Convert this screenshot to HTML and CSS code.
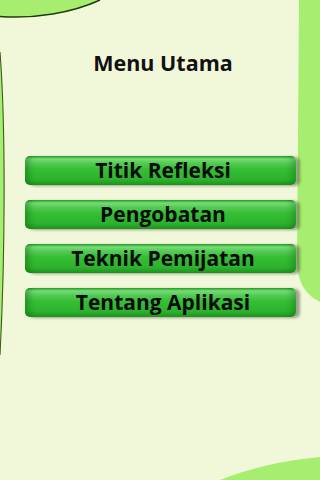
FILE: index.html
```html
<!DOCTYPE html>
<html lang="id">
<head>
    <meta charset="UTF-8">
    <meta name="viewport" content="width=device-width, initial-scale=1.0">
    <title>Menu Utama</title>
    <link rel="stylesheet" href="styles.css">
</head>
<body>
    <svg class="backdrop" width="320" height="480" viewBox="0 0 320 480" aria-hidden="true">
        <path class="blob" d="M0,0 L0,16.5 A135,77 0 0 0 100,0 Z"/>
        <path class="edge" d="M0,16.5 A135,77 0 0 0 100,0"/>
        <path class="blob" d="M299,0 L297,265 Q299,292 320,302 L320,0 Z"/>
        <path class="blob" d="M0,52 C6,130 5,260 0,355 Z"/>
        <path class="edge thin" d="M0,52 C6,130 5,260 0,355"/>
        <path class="blob" d="M220,480 Q265,462 320,457 L320,480 Z"/>
    </svg>

    <div class="screen">
        <h1 class="title">Menu Utama</h1>
        <div class="menu">
            <button class="menu-btn">Titik Refleksi</button>
            <button class="menu-btn">Pengobatan</button>
            <button class="menu-btn">Teknik Pemijatan</button>
            <button class="menu-btn">Tentang Aplikasi</button>
        </div>
    </div>
</body>
</html>
```

FILE: styles.css
```css
html, body {
    margin: 0;
    padding: 0;
}

body {
    width: 320px;
    height: 480px;
    overflow: hidden;
    position: relative;
    background: #f1f8da;
    font-family: 'Open Sans', 'Noto Sans', sans-serif;
}

.backdrop {
    position: absolute;
    left: 0;
    top: 0;
    z-index: 0;
}

.blob {
    fill: #a7ee70;
}

.edge {
    fill: none;
    stroke: #1f3a0c;
    stroke-width: 1.6;
}

.edge.thin {
    stroke: #3d5a22;
    stroke-width: 1.1;
}

.screen {
    position: relative;
    z-index: 1;
    padding-top: 48px;
}

.title {
    margin: 0;
    font-size: 21.5px;
    line-height: 29px;
    font-weight: 700;
    color: #111;
    text-align: center;
    padding-left: 6px;
}

.menu {
    display: flex;
    flex-direction: column;
    gap: 15px;
    margin: 79px 24px 0 25px;
}

.menu-btn {
    height: 29px;
    padding: 0 0 0 5px;
    border: none;
    border-radius: 5px;
    font-family: inherit;
    font-size: 21px;
    font-weight: 700;
    line-height: 29px;
    color: #0c0c0c;
    background: linear-gradient(to bottom,
        #25a025 0,
        #78dc78 10%,
        #56cc56 24%,
        #36be36 45%,
        #2db32d 80%,
        #1f971f 100%);
    box-shadow:
        inset 8px 0 6px -4px rgba(0, 90, 0, 0.4),
        inset -8px 0 6px -4px rgba(0, 90, 0, 0.3),
        4px 1px 3px rgba(0, 0, 0, 0.35);
    cursor: pointer;
}
```
